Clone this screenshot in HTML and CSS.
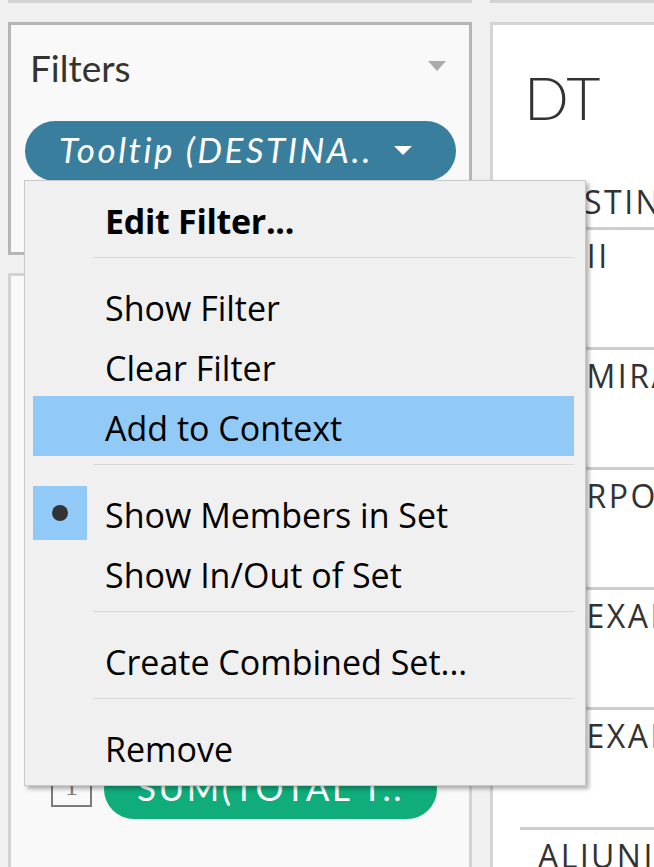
FILE: index.html
```html
<!DOCTYPE html>
<html lang="en">
<head>
<meta charset="utf-8">
<title>Filters menu</title>
<link rel="stylesheet" href="styles.css">
</head>
<body>
<div class="app">
  <div class="col col-left">
    <div class="stub"></div>
    <section class="panel filters">
      <div class="filters-head">
        <span class="filters-title">Filters</span>
        <svg class="tri" width="18" height="10" viewBox="0 0 18 10"><polygon points="0,0 18,0 9,10" fill="#ababab"/></svg>
      </div>
      <div class="pill pill-blue">
        <span class="pill-text pill-italic">Tooltip (DESTINA..</span>
        <svg class="pill-arrow" width="18" height="9" viewBox="0 0 18 9"><polygon points="0,0 18,0 9,9" fill="#ffffff"/></svg>
      </div>
    </section>
    <section class="panel marks">
      <div class="marks-row">
        <span class="num-box">1</span>
        <div class="pill pill-green"><span class="pill-text">SUM(TOTAL T..</span></div>
      </div>
    </section>
  </div>
  <div class="col col-right">
    <div class="stub stub-right"></div>
    <section class="panel view">
      <h1 class="view-title">DT</h1>
      <div class="table">
        <div class="th">DESTINATION</div>
        <div class="tr">AHII</div>
        <div class="tr">ADMIRALTY</div>
        <div class="tr">ADRPORT</div>
        <div class="tr">ADEXAMPLE</div>
        <div class="tr">ADEXAMPLE</div>
        <div class="tr">ALJUNIED</div>
      </div>
    </section>
  </div>

  <div class="menu" role="menu">
    <div class="mi bold"><span class="mi-icon"></span><span class="mi-label">Edit Filter...</span></div>
    <div class="sep"></div>
    <div class="mi"><span class="mi-icon"></span><span class="mi-label">Show Filter</span></div>
    <div class="mi"><span class="mi-icon"></span><span class="mi-label">Clear Filter</span></div>
    <div class="mi active"><span class="mi-icon"></span><span class="mi-label">Add to Context</span></div>
    <div class="sep"></div>
    <div class="mi"><span class="mi-icon"><span class="check"><span class="dot"></span></span></span><span class="mi-label">Show Members in Set</span></div>
    <div class="mi"><span class="mi-icon"></span><span class="mi-label">Show In/Out of Set</span></div>
    <div class="sep"></div>
    <div class="mi"><span class="mi-icon"></span><span class="mi-label">Create Combined Set...</span></div>
    <div class="sep"></div>
    <div class="mi"><span class="mi-icon"></span><span class="mi-label">Remove</span></div>
  </div>
</div>
</body>
</html>
```

FILE: styles.css
```css
* { box-sizing: border-box; }
html, body { margin: 0; height: 100%; }
body {
  background: #f0f0f0;
  overflow: hidden;
  font-family: "Open Sans", sans-serif;
}
.app {
  position: relative;
  display: flex;
  gap: 18px;
  padding-left: 8px;
  height: 867px;
  overflow: hidden;
}
.col { display: flex; flex-direction: column; }
.col-left { width: 464px; flex: none; }
.col-right { flex: 1; min-width: 0; }

.stub {
  height: 3px;
  flex: none;
  background: #f6f6f6;
  border: solid #d2d2d2;
  border-width: 0 3px 3px 3px;
}
.stub-right { border-right-width: 0; }

.panel { flex: none; }

/* Filters card */
.filters {
  margin-top: 19px;
  height: 233px;
  border: 3px solid #b6b6b6;
  background: #f9f9f9;
  padding: 0 13px 0 14px;
}
.filters-head {
  display: flex;
  align-items: center;
  justify-content: space-between;
  margin-top: 21px;
  height: 44px;
  padding-left: 5px;
  padding-right: 10px;
}
.filters-title {
  font-family: Lato, sans-serif;
  font-size: 37px;
  line-height: 44px;
  color: #333;
}
.tri { display: block; margin-top: -4px; }

.pill {
  display: flex;
  align-items: center;
  height: 60px;
  border-radius: 30px;
  color: #fff;
  padding-bottom: 5px;
}
.pill-blue {
  margin-top: 31px;
  background: #3a7e9d;
  padding-left: 34px;
}
.pill-text {
  font-family: Lato, sans-serif;
  font-size: 35px;
  line-height: 42px;
  white-space: nowrap;
  letter-spacing: 2.5px;
}
.pill-italic { font-style: italic; }
.pill-arrow { display: block; margin-left: auto; margin-right: 44px; margin-top: 4px; }

/* Marks card */
.marks {
  margin-top: 18px;
  flex: 1;
  border: 3px solid #d3d3d3;
  border-bottom: 0;
  background: #f9f9f9;
  padding-top: 483px;
}
.marks-row {
  display: flex;
  align-items: center;
  gap: 12px;
  padding-left: 40px;
}
.num-box {
  width: 41px;
  height: 41px;
  margin-bottom: 5px;
  border: 2px solid #7b7b7b;
  display: flex;
  align-items: center;
  justify-content: center;
  font-family: "Liberation Serif", serif;
  font-size: 26px;
  color: #7b7b7b;
}
.pill-green {
  width: 333px;
  background: #10ad7b;
  padding-left: 33px;
}

/* View */
.view {
  margin-top: 19px;
  flex: 1;
  background: #fff;
  border: solid #d4d4d4;
  border-width: 3px 0 0 3px;
  overflow: hidden;
}
.view-title {
  margin: 38px 0 0 31px;
  font-family: Lato, sans-serif;
  font-weight: 300;
  font-size: 59px;
  line-height: 70px;
  color: #333;
}
.table {
  margin: 49px 0 0 27px;
  font-size: 32px;
  color: #333;
  letter-spacing: 2.5px;
  white-space: nowrap;
}
.th {
  padding: 0 0 5px 18px;
  line-height: 40px;
  border-bottom: 3px solid #cdcdcd;
}
.tr {
  height: 120px;
  padding: 6px 0 0 18px;
  line-height: 40px;
  border-bottom: 3px solid #cdcdcd;
}

/* Context menu */
.menu {
  position: absolute;
  left: 24px;
  top: 180px;
  width: 562px;
  background: #f0f0f0;
  border: 1px solid #c9c9c9;
  box-shadow: 3px 3px 4px rgba(0, 0, 0, 0.3);
  padding: 8px 11px 8px 8px;
  font-family: "Open Sans", sans-serif;
  font-size: 34px;
  color: #000;
}
.mi {
  display: flex;
  height: 60px;
}
.mi.active { background: #91c9f7; }
.mi-icon {
  width: 60px;
  flex: none;
  display: flex;
}
.mi-label {
  padding: 4px 0 0 12px;
  line-height: 56px;
  white-space: nowrap;
}
.mi.bold .mi-label { font-weight: 700; letter-spacing: -0.3px; }
.check {
  width: 54px;
  height: 54px;
  margin: 3px 6px 3px 0;
  background: #91c9f7;
  display: flex;
  align-items: center;
  justify-content: center;
}
.dot {
  width: 16px;
  height: 16px;
  border-radius: 50%;
  background: #333;
}
.sep { height: 27px; padding-top: 8px; }
.sep::before {
  content: "";
  display: block;
  height: 1px;
  margin-left: 60px;
  background: #d7d7d7;
}
```
